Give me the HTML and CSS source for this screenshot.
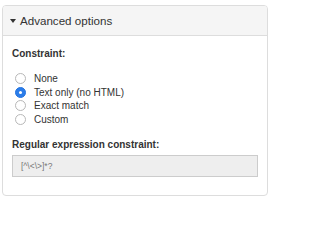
FILE: index.html
```html
<!DOCTYPE html>
<html>
<head>
<meta charset="utf-8">
<link rel="stylesheet" href="styles.css">
</head>
<body>
<div class="panel">
  <div class="panel-head">
    <span class="caret"></span>
    <span class="title">Advanced options</span>
  </div>
  <div class="panel-body">
    <div class="label">Constraint:</div>
    <div class="radios">
      <label class="radio"><span class="dot"></span><span>None</span></label>
      <label class="radio"><span class="dot on"></span><span>Text only (no HTML)</span></label>
      <label class="radio"><span class="dot"></span><span>Exact match</span></label>
      <label class="radio"><span class="dot"></span><span>Custom</span></label>
    </div>
    <div class="label">Regular expression constraint:</div>
    <div class="input">[^\&lt;\&gt;]*?</div>
  </div>
</div>
</body>
</html>
```
FILE: styles.css
```css
html, body {
  margin: 0;
  padding: 0;
  background: #fff;
}
body {
  font-family: "Liberation Sans", Arial, sans-serif;
  color: #333;
  width: 273px;
  height: 200px;
  overflow: hidden;
}
.panel {
  margin: 5px 0 0 2px;
  width: 266px;
  height: 191px;
  box-sizing: border-box;
  border: 1px solid #ddd;
  border-radius: 4px;
  overflow: hidden;
}
.panel-head {
  height: 30px;
  box-sizing: border-box;
  background: #f5f5f5;
  border-bottom: 1px solid #ddd;
  display: flex;
  align-items: center;
  padding-left: 7px;
  gap: 4px;
}
.caret {
  width: 0;
  height: 0;
  border-left: 3.5px solid transparent;
  border-right: 3.5px solid transparent;
  border-top: 4px solid #333;
  margin-top: 1px;
}
.title {
  font-size: 11.6px;
}
.panel-body {
  padding: 12px 9px 0 9px;
}
.label {
  font-size: 10px;
  font-weight: bold;
  line-height: 12px;
}
.radios {
  display: flex;
  flex-direction: column;
  padding: 12px 0 13px 3px;
}
.radio {
  display: flex;
  align-items: center;
  gap: 8px;
  font-size: 10px;
  line-height: 13.5px;
}
.dot {
  width: 11px;
  height: 11px;
  box-sizing: border-box;
  border: 1px solid #b8b8b8;
  border-radius: 50%;
  background: #fff;
  display: flex;
  align-items: center;
  justify-content: center;
}
.dot.on {
  background: #2b7de9;
  border-color: #2574e0;
}
.dot.on::after {
  content: "";
  width: 3px;
  height: 3px;
  border-radius: 50%;
  background: #fff;
}
.input {
  margin-top: 4px;
  width: 246px;
  height: 22px;
  box-sizing: border-box;
  background: #eee;
  border: 1px solid #ccc;
  font-size: 8.5px;
  color: #777;
  padding-left: 8px;
  display: flex;
  align-items: center;
}
```
